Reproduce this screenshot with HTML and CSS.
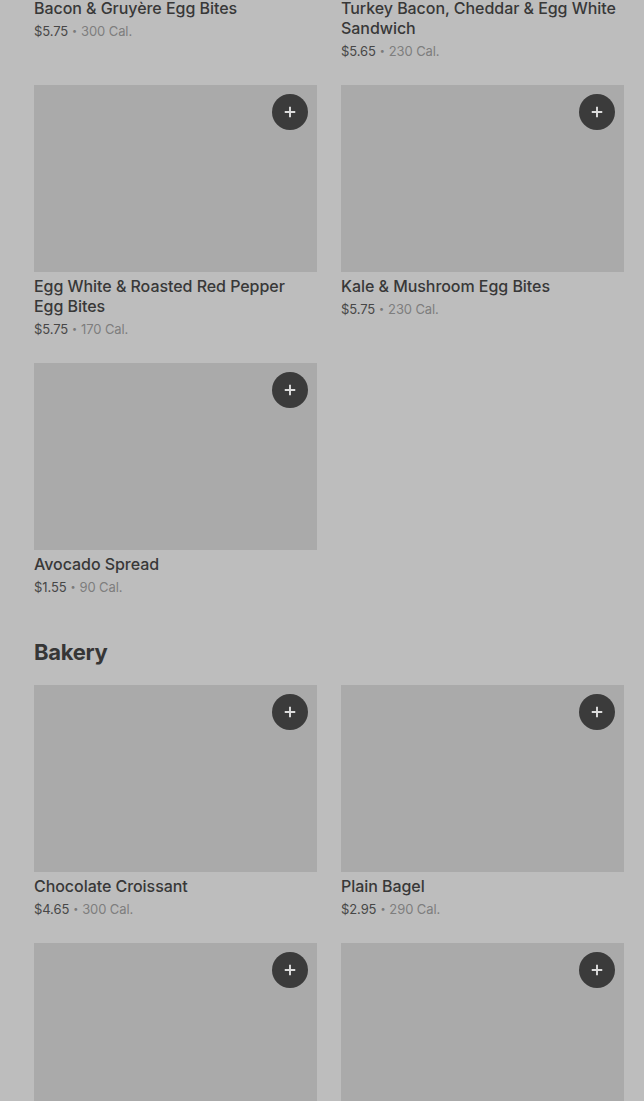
FILE: index.html
```html
<!DOCTYPE html>
<html lang="en">
<head>
<meta charset="utf-8">
<title>Menu</title>
<link rel="stylesheet" href="styles.css">
</head>
<body>
<main class="page">
  <section class="section section-first">
    <div class="grid">
      <article class="card">
        <div class="thumb"><button class="add" aria-label="Add"><svg viewBox="0 0 16 16" width="14" height="14"><path d="M8 2v12M2 8h12" stroke="currentColor" stroke-width="2.2" fill="none"/></svg></button></div>
        <h3 class="name">Bacon &amp; Gruyère Egg Bites</h3>
        <p class="meta"><span class="price">$5.75</span><span class="dot">•</span><span class="cal">300 Cal.</span></p>
      </article>
      <article class="card">
        <div class="thumb"><button class="add" aria-label="Add"><svg viewBox="0 0 16 16" width="14" height="14"><path d="M8 2v12M2 8h12" stroke="currentColor" stroke-width="2.2" fill="none"/></svg></button></div>
        <h3 class="name">Turkey Bacon, Cheddar &amp; Egg White Sandwich</h3>
        <p class="meta"><span class="price">$5.65</span><span class="dot">•</span><span class="cal">230 Cal.</span></p>
      </article>
      <article class="card">
        <div class="thumb"><button class="add" aria-label="Add"><svg viewBox="0 0 16 16" width="14" height="14"><path d="M8 2v12M2 8h12" stroke="currentColor" stroke-width="2.2" fill="none"/></svg></button></div>
        <h3 class="name">Egg White &amp; Roasted Red Pepper Egg Bites</h3>
        <p class="meta"><span class="price">$5.75</span><span class="dot">•</span><span class="cal">170 Cal.</span></p>
      </article>
      <article class="card">
        <div class="thumb"><button class="add" aria-label="Add"><svg viewBox="0 0 16 16" width="14" height="14"><path d="M8 2v12M2 8h12" stroke="currentColor" stroke-width="2.2" fill="none"/></svg></button></div>
        <h3 class="name">Kale &amp; Mushroom Egg Bites</h3>
        <p class="meta"><span class="price">$5.75</span><span class="dot">•</span><span class="cal">230 Cal.</span></p>
      </article>
      <article class="card">
        <div class="thumb"><button class="add" aria-label="Add"><svg viewBox="0 0 16 16" width="14" height="14"><path d="M8 2v12M2 8h12" stroke="currentColor" stroke-width="2.2" fill="none"/></svg></button></div>
        <h3 class="name">Avocado Spread</h3>
        <p class="meta"><span class="price">$1.55</span><span class="dot">•</span><span class="cal">90 Cal.</span></p>
      </article>
    </div>
  </section>

  <section class="section">
    <h2 class="section-title">Bakery</h2>
    <div class="grid">
      <article class="card">
        <div class="thumb"><button class="add" aria-label="Add"><svg viewBox="0 0 16 16" width="14" height="14"><path d="M8 2v12M2 8h12" stroke="currentColor" stroke-width="2.2" fill="none"/></svg></button></div>
        <h3 class="name">Chocolate Croissant</h3>
        <p class="meta"><span class="price">$4.65</span><span class="dot">•</span><span class="cal">300 Cal.</span></p>
      </article>
      <article class="card">
        <div class="thumb"><button class="add" aria-label="Add"><svg viewBox="0 0 16 16" width="14" height="14"><path d="M8 2v12M2 8h12" stroke="currentColor" stroke-width="2.2" fill="none"/></svg></button></div>
        <h3 class="name">Plain Bagel</h3>
        <p class="meta"><span class="price">$2.95</span><span class="dot">•</span><span class="cal">290 Cal.</span></p>
      </article>
      <article class="card">
        <div class="thumb"><button class="add" aria-label="Add"><svg viewBox="0 0 16 16" width="14" height="14"><path d="M8 2v12M2 8h12" stroke="currentColor" stroke-width="2.2" fill="none"/></svg></button></div>
      </article>
      <article class="card">
        <div class="thumb"><button class="add" aria-label="Add"><svg viewBox="0 0 16 16" width="14" height="14"><path d="M8 2v12M2 8h12" stroke="currentColor" stroke-width="2.2" fill="none"/></svg></button></div>
      </article>
    </div>
  </section>
</main>
</body>
</html>
```

FILE: styles.css
```css
html, body {
  margin: 0;
  padding: 0;
  background: #bdbdbd;
  overflow: hidden;
}

body {
  font-family: "Inter", "Roboto", "Liberation Sans", sans-serif;
  color: #383838;
  -webkit-font-smoothing: antialiased;
}

.page {
  padding: 0 20px 0 34px;
}

.section-first {
  margin-top: -193px;
}

.section-title {
  margin: 41px 0 19px;
  font-size: 22px;
  line-height: 28px;
  font-weight: 700;
  letter-spacing: -0.3px;
  color: #363636;
}

.grid {
  display: grid;
  grid-template-columns: 283px 283px;
  column-gap: 24px;
  row-gap: 24px;
  align-items: start;
}

.card {
  display: flex;
  flex-direction: column;
}

.thumb {
  position: relative;
  height: 187px;
  background: #aaaaaa;
}

.add {
  position: absolute;
  top: 9px;
  right: 9px;
  width: 36px;
  height: 36px;
  border: 0;
  padding: 0;
  border-radius: 50%;
  background: #3b3b3b;
  color: #dcdcdc;
  display: flex;
  align-items: center;
  justify-content: center;
}

.name {
  margin: 4px 0 0;
  padding-right: 6px;
  font-size: 16px;
  line-height: 20px;
  font-weight: 500;
  color: #383838;
  letter-spacing: -0.05px;
}

.meta {
  margin: 3px 0 0;
  font-size: 13px;
  line-height: 20px;
  letter-spacing: -0.1px;
  display: flex;
  align-items: center;
  gap: 4px;
}

.price {
  color: #474747;
}

.dot {
  color: #7a7a7a;
  font-size: 9px;
}

.cal {
  color: #7e7e7e;
}
```
